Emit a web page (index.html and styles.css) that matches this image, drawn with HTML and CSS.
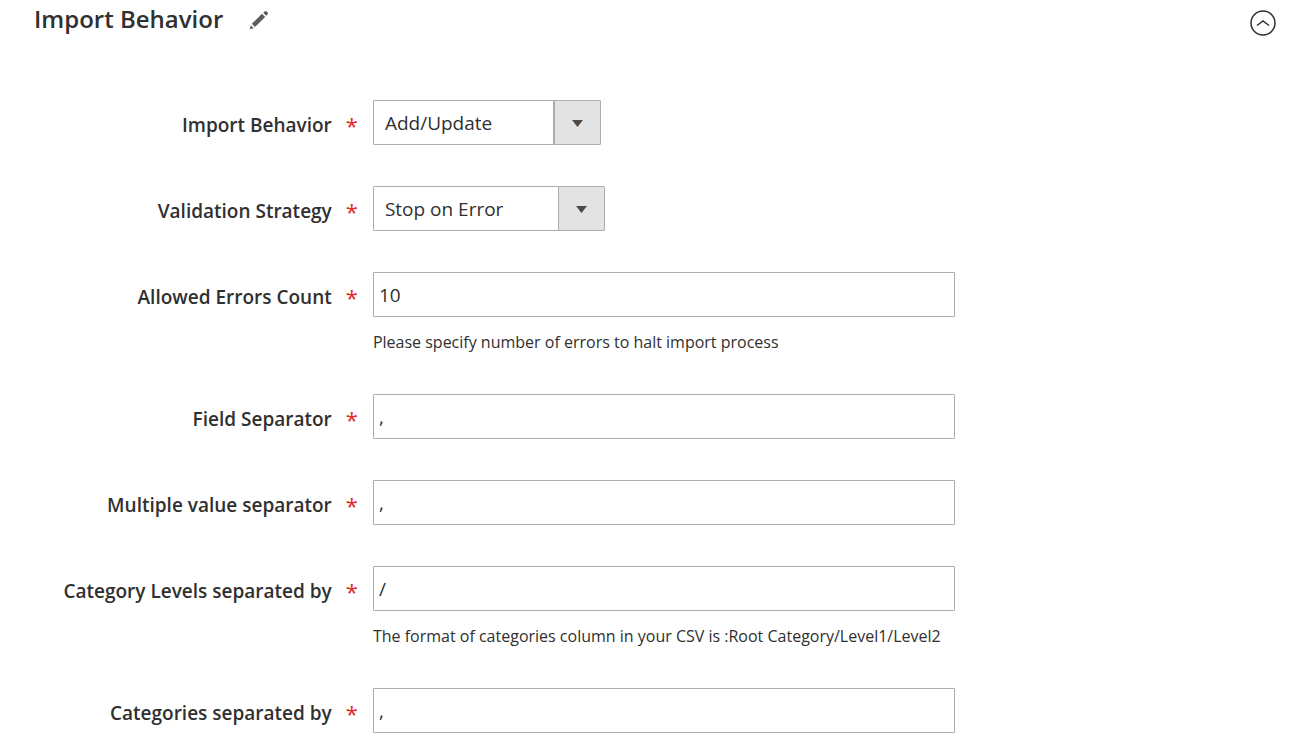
FILE: index.html
```html
<!DOCTYPE html>
<html lang="en">
<head>
    <meta charset="UTF-8">
    <meta name="viewport" content="width=device-width, initial-scale=1.0">
    <title>Import Behavior</title>
    <link rel="stylesheet" href="styles.css">
</head>
<body>
    <form class="section">
        <div class="section-header">
            <h2>Import Behavior</h2>
            <svg class="icon-edit" viewBox="0 0 20 20" aria-hidden="true">
                <path d="M.8 19.2l1-4 3 3zM2.8 13.8L13 3.8l3.2 3.2L6 17zM14.3 2.8l1.6-1.6q.7-.6 1.4 0l1.5 1.5q.6.7 0 1.4l-1.6 1.6z"/>
            </svg>
            <button type="button" class="toggle" aria-label="Collapse section">
                <svg viewBox="0 0 26 26" aria-hidden="true">
                    <circle cx="13" cy="13" r="12"/>
                    <path d="M7 15.5l6-4.5 6 4.5"/>
                </svg>
            </button>
        </div>

        <div class="field">
            <label for="behavior">Import Behavior</label>
            <div class="control">
                <select id="behavior" class="select-behavior" required>
                    <option selected>Add/Update</option>
                </select>
            </div>
        </div>
        <div class="field">
            <label for="strategy">Validation Strategy</label>
            <div class="control">
                <select id="strategy" class="select-strategy" required>
                    <option selected>Stop on Error</option>
                </select>
            </div>
        </div>
        <div class="field">
            <label for="errorsCount">Allowed Errors Count</label>
            <div class="control">
                <input type="text" id="errorsCount" value="10" aria-describedby="errorsNote" required>
                <p class="note" id="errorsNote">Please specify number of errors to halt import process</p>
            </div>
        </div>
        <div class="field">
            <label for="fieldSeparator">Field Separator</label>
            <div class="control">
                <input type="text" id="fieldSeparator" value="," required>
            </div>
        </div>
        <div class="field">
            <label for="valueSeparator">Multiple value separator</label>
            <div class="control">
                <input type="text" id="valueSeparator" value="," required>
            </div>
        </div>
        <div class="field">
            <label for="levelSeparator">Category Levels separated by</label>
            <div class="control">
                <input type="text" id="levelSeparator" value="/" aria-describedby="levelNote" required>
                <p class="note" id="levelNote">The format of categories column in your CSV is :Root Category/Level1/Level2</p>
            </div>
        </div>
        <div class="field">
            <label for="categorySeparator">Categories separated by</label>
            <div class="control">
                <input type="text" id="categorySeparator" value="," required>
            </div>
        </div>
    </form>
</body>
</html>
```
FILE: styles.css
```css
* {
    box-sizing: border-box;
}
body {
    margin: 0;
    background-color: #fff;
    color: #303030;
    font-family: "Open Sans", "Noto Sans", sans-serif;
    font-size: 19px;
}
.section {
    padding: 0 34px 13px;
}
.section-header {
    display: flex;
    align-items: flex-start;
    height: 40px;
    margin-bottom: 60px;
}
h2 {
    margin: 0;
    font-size: 24px;
    font-weight: 600;
    line-height: 38px;
}
.icon-edit {
    width: 20px;
    height: 20px;
    margin: 10px 0 0 26px;
    fill: #5c5c5c;
}
.toggle {
    width: 26px;
    height: 26px;
    margin: 10px 0 0 auto;
    padding: 0;
    border: none;
    background: none;
    cursor: pointer;
}
.toggle svg {
    display: block;
    fill: none;
    stroke: #303030;
    stroke-width: 1.5;
}
.field {
    display: grid;
    grid-template-columns: calc(26% + 1px) calc(50% - 39px);
    column-gap: 15px;
    margin-bottom: 41px;
}
.field:last-child {
    margin-bottom: 0;
}
label {
    display: flex;
    align-items: flex-start;
    justify-content: flex-end;
    gap: 14px;
    padding-top: 5px;
    font-weight: 600;
    line-height: 40px;
}
label::after {
    content: "*";
    color: #e22626;
    font-size: 22px;
    font-weight: 400;
}
input,
select {
    display: block;
    height: 45px;
    border: 1px solid #adadad;
    border-radius: 1px;
    background-color: #fff;
    color: #303030;
    font: inherit;
}
input {
    width: 100%;
    padding: 0 5px;
}
/* arrow, grey button area, divider */
select {
    appearance: none;
    padding: 0 58px 0 11px;
    background-image:
        url("data:image/svg+xml,%3Csvg xmlns='http://www.w3.org/2000/svg' viewBox='0 0 11 7'%3E%3Cpath d='M0 0h11L5.5 7z' fill='%23514943'/%3E%3C/svg%3E"),
        linear-gradient(#e3e3e3, #e3e3e3),
        linear-gradient(#adadad, #adadad);
    background-position: right 17px top 19px, right, right;
    background-repeat: no-repeat;
    background-size: 11px 7px, 45px 100%, 46px 100%;
}
.select-behavior {
    width: 228px;
    background-size: 11px 7px, 45px 100%, 47px 100%;
}
.select-strategy {
    width: 232px;
}
.note {
    margin: 14px 0 0;
    font-size: 16px;
    line-height: 22px;
}
input:focus,
select:focus {
    border-color: #007bdb;
    outline: none;
}
```
